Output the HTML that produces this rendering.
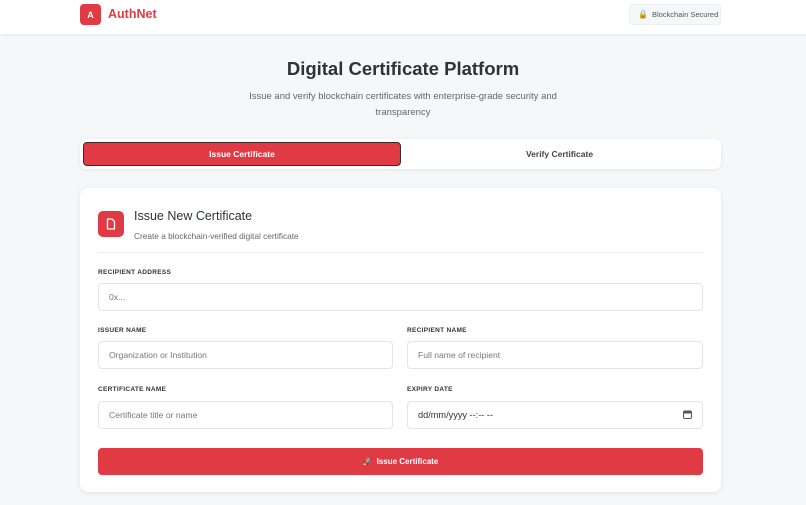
<!DOCTYPE html>
<html><head><meta charset="utf-8"><style>
*{margin:0;padding:0;box-sizing:border-box}
body{width:806px;height:505px;overflow:hidden;background:#f6f7f9;font-family:"Liberation Sans",sans-serif;position:relative;color:#2d3436}
.a{position:absolute}
.hdr{left:0;top:0;width:806px;height:34px;background:#fff;box-shadow:0 1px 3px rgba(0,0,0,.08)}
.logo{left:80px;top:4px;width:21px;height:21px;background:#e03a45;border-radius:4px;color:#fff;font-weight:bold;font-size:9px;display:flex;align-items:center;justify-content:center}
.brand{left:108px;top:7px;font-size:12.5px;font-weight:bold;color:#e03a45}
.badge{left:629px;top:4px;width:92px;height:21px;background:#f6f7f9;border:1px solid #eceef1;border-radius:4px;font-size:7.5px;color:#555;display:flex;align-items:center;padding-left:8px;gap:4px}
h1{position:absolute;left:0;width:806px;top:58px;text-align:center;font-size:18.5px;font-weight:bold;color:#2d3436}
.sub{left:240px;width:326px;top:89px;text-align:center;font-size:9.5px;line-height:16px;color:#666}
.tabs{left:80px;top:139px;width:641px;height:30px;background:#fff;border-radius:6px;box-shadow:0 1px 4px rgba(0,0,0,.08)}
.t1{left:83px;top:142px;width:318px;height:24px;background:#e03a45;border:1.5px solid #3a2a2a;border-radius:4px;color:#fff;font-size:8.5px;font-weight:bold;display:flex;align-items:center;justify-content:center}
.t2{left:401px;top:142px;width:317px;height:24px;color:#444;font-size:8.5px;font-weight:bold;display:flex;align-items:center;justify-content:center}
.card{left:80px;top:188px;width:641px;height:304px;background:#fff;border-radius:8px;box-shadow:0 1px 6px rgba(0,0,0,.08)}
.ic{left:98px;top:211px;width:26px;height:26px;background:#e03a45;border-radius:5px;display:flex;align-items:center;justify-content:center}
.ct{left:134px;top:209px;font-size:12.5px;color:#2d3436}
.cs{left:134px;top:231px;font-size:8.3px;color:#666}
.div{left:98px;top:252px;width:605px;height:1px;background:#eceef1}
.lb{font-size:6.5px;font-weight:bold;color:#333;letter-spacing:.3px}
.in{height:28px;border:1px solid #e3e5e9;border-radius:4px;background:#fff;font-size:8.6px;color:#777;display:flex;align-items:center;padding-left:10px}
.btn{left:98px;top:448px;width:605px;height:27px;background:#e03a45;border-radius:4px;color:#fff;font-size:8px;font-weight:bold;display:flex;align-items:center;justify-content:center;gap:4px}
</style></head><body>
<div class="a hdr"></div>
<div class="a logo">A</div>
<div class="a brand">AuthNet</div>
<div class="a badge"><span style="font-size:8px">🔒</span>Blockchain Secured</div>
<h1>Digital Certificate Platform</h1>
<div class="a sub">Issue and verify blockchain certificates with enterprise-grade security and transparency</div>
<div class="a tabs"></div>
<div class="a t1">Issue Certificate</div>
<div class="a t2">Verify Certificate</div>
<div class="a card"></div>
<div class="a ic"><svg width="10" height="12" viewBox="0 0 10 12"><path d="M1.5 1h4.5l2.5 2.5v7.5h-7z" fill="none" stroke="#fff" stroke-width="1.3" stroke-linejoin="round"/></svg></div>
<div class="a ct">Issue New Certificate</div>
<div class="a cs">Create a blockchain-verified digital certificate</div>
<div class="a div"></div>
<div class="a lb" style="left:98px;top:269px">RECIPIENT ADDRESS</div>
<div class="a in" style="left:98px;top:283px;width:605px">0x...</div>
<div class="a lb" style="left:98px;top:327px">ISSUER NAME</div>
<div class="a in" style="left:98px;top:341px;width:295px">Organization or Institution</div>
<div class="a lb" style="left:407px;top:327px">RECIPIENT NAME</div>
<div class="a in" style="left:407px;top:341px;width:296px">Full name of recipient</div>
<div class="a lb" style="left:98px;top:386px">CERTIFICATE NAME</div>
<div class="a in" style="left:98px;top:401px;width:295px">Certificate title or name</div>
<div class="a lb" style="left:407px;top:386px">EXPIRY DATE</div>
<div class="a in" style="left:407px;top:401px;width:296px;color:#333;font-size:9.2px">dd/mm/yyyy --:-- --</div>
<svg class="a" style="left:683px;top:410px" width="9" height="9" viewBox="0 0 9 9"><rect x="0.5" y="1" width="8" height="7.5" rx="1.5" fill="none" stroke="#555"/><rect x="0.5" y="1" width="8" height="2.5" fill="#555"/></svg>
<div class="a btn"><span style="font-size:8px">🚀</span>Issue Certificate</div>
</body></html>
